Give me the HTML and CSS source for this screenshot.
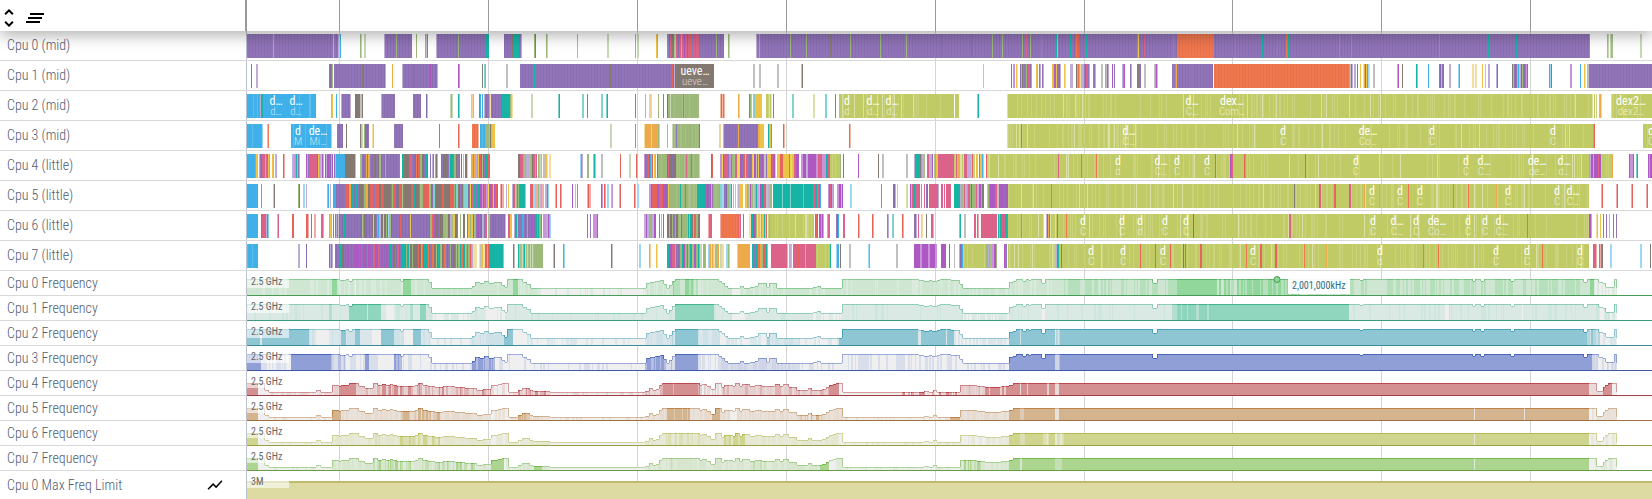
FILE: index.html
```html
<!DOCTYPE html>
<html lang="en">
<head>
<meta charset="utf-8">
<title>CPU trace timeline</title>
<link rel="stylesheet" href="styles.css">
</head>
<body>
<main class="viewer">
  <header class="topbar">
    <div class="toolbar">
      <button class="tool" type="button" aria-label="Expand all">
        <svg width="12" height="24" viewBox="6 0 12 24"><path d="M12 5.83L15.17 9l1.41-1.41L12 3 7.41 7.59 8.83 9 12 5.83zm0 12.34L8.83 15l-1.41 1.41L12 21l4.59-4.59L15.17 15 12 18.17z"/></svg>
      </button>
      <button class="tool" type="button" aria-label="Clear pinned tracks">
        <svg width="18" height="24" viewBox="3 0 18 24"><path d="M5 13h14v-2H5v2zm-2 4h14v-2H3v2zM7 7v2h14V7H7z"/></svg>
      </button>
    </div>
    <div class="ruler" id="ruler"></div>
  </header>
  <section class="tracks" id="tracks">
    <div class="grid" id="grid"></div>
  </section>
</main>
<script src="timeline.js"></script>
</body>
</html>
```
FILE: styles.css
```css
* {
  box-sizing: border-box;
}

body {
  margin: 0;
  background: #fff;
  font-family: "Roboto Condensed", Roboto, sans-serif;
}

.viewer {
  display: flex;
  flex-direction: column;
  height: 100vh;
  overflow: hidden;
}

.topbar {
  position: relative;
  z-index: 2;
  display: flex;
  flex: none;
  height: 31px;
  background: #fff;
  box-shadow: 0 4px 16px rgba(0, 0, 0, 0.32);
}

.toolbar {
  display: flex;
  flex: none;
  align-items: center;
  gap: 11px;
  width: 245px;
  padding: 4px 0 0 3px;
}

.tool {
  display: block;
  height: 24px;
  padding: 0;
  border: 0;
  background: none;
}

.tool svg {
  display: block;
}

.ruler {
  position: relative;
  flex: 1;
  border-left: 2px solid #999;
}

.tick {
  position: absolute;
  top: 0;
  bottom: 0;
  width: 1px;
  background: #999;
}

.tracks {
  position: relative;
  display: flex;
  flex: 1;
  flex-direction: column;
}

.grid {
  position: absolute;
  top: 0;
  right: 0;
  bottom: 0;
  left: 246px;
  border-left: 1px solid #b9c1cf;
}

.grid .tick {
  background: #d4d4d4;
}

.track {
  position: relative;
  display: flex;
  flex: none;
  height: 25px;
  border-bottom: 1px solid #d9d9d9;
}

.track.sched {
  height: 30px;
}

.track.limit {
  flex: 1;
  border-bottom: 0;
}

.shell {
  display: flex;
  flex: none;
  align-items: center;
  justify-content: space-between;
  width: 247px;
  padding: 0 23px 0 7px;
}

.sched .shell {
  padding-bottom: 1px;
}

.title {
  margin: 0;
  color: #4f5d70;
  font-size: 14px;
  font-weight: 300;
  white-space: nowrap;
}

.lane {
  position: relative;
  flex: 1;
  min-width: 0;
  overflow: hidden;
}

.sched .lane {
  margin: 3px 0 2px;
}

.freq .lane {
  margin-bottom: -1px;
  overflow: visible;
}

.lane svg {
  display: block;
  width: 100%;
  height: 100%;
}

.slice {
  position: absolute;
  top: 1px;
  display: flex;
  flex-direction: column;
  align-items: center;
  color: #fff;
  transform: translateX(-50%);
  white-space: nowrap;
}

.slice b {
  font-size: 12px;
  font-weight: 400;
  line-height: 12px;
}

.slice small {
  color: rgba(255, 255, 255, 0.7);
  font-size: 11px;
  font-weight: 300;
  line-height: 10px;
}

.scale {
  position: absolute;
  top: 4px;
  left: 0;
  width: 42px;
  padding-left: 4px;
  background: rgba(255, 255, 255, 0.6);
  color: #666;
  font-size: 10px;
  line-height: 13px;
  white-space: nowrap;
}

.limit .lane {
  margin-top: 10px;
  border-top: 2px solid #bfbb6c;
  background: #dddba2;
  overflow: visible;
}

.limit .scale {
  top: -8px;
}

.marker {
  position: absolute;
  top: 5px;
  width: 7px;
  height: 7px;
  border: 1px solid #43a355;
  border-radius: 50%;
  background: #8fd49a;
  transform: translateX(-50%);
}

.readout {
  position: absolute;
  top: 7px;
  z-index: 1;
  padding: 0 4px;
  background: rgba(255, 255, 255, 0.94);
  color: #2f6d88;
  font-size: 10px;
  line-height: 16px;
  white-space: nowrap;
}
```
FILE: timeline.js
```js
// Time axis: lane units run from START to START + SPAN.
const START = 247;
const SPAN = 1405;
const END = START + SPAN;
const TICKS = [339, 488, 637, 786, 935, 1084, 1232, 1381, 1530];

const COLORS = {
  p: '#9275b9', d: '#896db1', P: '#beaed7', b: '#3fb1e8', B: '#9dd7f3', c: '#5cbdec',
  o: '#c1cb65', q: '#cad37c', O: '#dbe0a6', g: '#9cb97a', G: '#c8d8b5', h: '#a6c088',
  t: '#17b3a5', T: '#7fd5cd', r: '#e4635b', R: '#f0aaa8', n: '#ef784f', i: '#e9704a',
  N: '#f6b9a4', y: '#ecc348', Y: '#f5dfa0', a: '#ecaa4b', A: '#f5cf98',
  m: '#ae58c2', M: '#ca92d8', k: '#db638a', K: '#ecabc2', w: '#837971', W: '#c2c0bf',
  e: '#e8da50'
};

// "x:letters" paints columns, a number after a letter repeats it.
// "x-y~letters" fills a busy range with a mix of the letters.
const SCHED = [
  { name: 'Cpu 0 (mid)', data: '247:p91 273:g 333:P 338:PBb 360:gG 364:GG 384:Pp27 396:g 416:g 425:gWp 436:Pp48 458:g 485:t4 504:p8wt6p2P 520:pP 534:gt 546:gG 577:g 607:GG 635:g.GG 656:yg 667:bspkpwtgykkpkkgkkmkkpkkrkpkkpkkkp25 716:g 728:gG 756:Pp832 759:g 790:g 806:g 830:w 850:g 880:g 906:g 941:w 971:w 992:g 1002:g 1021:tg 1026:k 1030:g 1041:s 1056:tT 1067:k 1070:tt 1076:nrr 1086:t 1137:by 1144:k 1173:k 1177:n37 1235:k 1262:t 1277:k 1286:nnt 1339:b 1351:b 1439:b 1488:t 1516:tt 1589:b 1607:gG.Ggg 1640:GG', text: [] },
  { name: 'Cpu 1 (mid)', data: '251:p 256:PP 329:p3g.p51P 362:w 392:a 402:Pp34P 413:w 430:m 458:mM 482:w.Tg 506:WW 520:p152rwP 534:t 610:w 675:w39 753:WW 759:WW 777:WW 801:Ww 983:y 1011:m.MM.yY 1020:pPwkprgtkrpg 1036:yP.pP.pP 1052:yPmpyp3P 1064:yY 1070:PPP 1076:wgnaYPPPpmkkpP 1093:kpP 1101:WW 1105:gWmP 1112:m.p 1122:Pbm 1130:pP 1137:pwkp 1144:WW 1154:Wgmy 1172:pkpnap36 1191:t 1214:n135gWmP.PP.m 1360:y 1363:YapybBY 1373:WW 1397:Pm 1402:w 1416:tT 1428:b 1439:ppPpp 1449:PP 1458:Bb 1472:YY.YY 1482:y..y 1488:PP 1496:Pp 1512:wPpppPbBPmgppkMm 1549:bBp 1570:MM 1580:b 1584:yY.PWp65', text: [[695, 'ueve…', 'ueve…']] },
  { name: 'Cpu 2 (mid)', data: '247:b13Pt2b53 253:c 257:c 309:gc 331:Py 336:b 341:Pp8P 355:w5WWw 381:Pp13 413:p8 426:pW 450:GgG 458:tT 471:NAT 479:tb.b.Pp4aYp11t8gyY 531:GG 558:Tt 582:TT 587:t 601:TT 606:Tt 635:t 645:a 649:AAA 658:g 663:t 667:wggGg28 683:k 720:NrNnN 738:aA 749:tgy.TTy7 766:oooOoY.t 792:TT 813:OO 825:TT 835:t 839:o120 854:O 863:O 882:O 901:O 913:O 954:.o 977:Tt 1007:Oo584O.o.o 1599:oaO 1611:Oo40', text: [[276, 'd…', 'd…'], [296, 'd…', 'd…'], [847, 'd', 'd'], [873, 'd…', 'd…'], [892, 'd…', 'd…'], [1192, 'd…', 'C…'], [1232, 'dex…', 'Com…'], [1631, 'dex2…', 'dex2…']] },
  { name: 'Cpu 3 (mid)', data: '247:b15B 252:c 267:Nn 291:b40B 305:c 337:p6 346:w 360:wWG.gwpwp 372:Yy 394:p9 439:r 458:rN 472:n6N.b5g4PwPy3 610:GG 635:n 644:Ya6Aa6gG 667:g 672:Gg26p 676:p 719:AA 723:Pp34aPyyyy 738:a 768:tTyn 783:rN 849:nN 1007:Oo585gr 1021:k 1643:o9', text: [[298, 'd', 'M'], [318, 'de…', 'Mi…'], [1129, 'd…', 'C…'], [1283, 'd', 'C'], [1368, 'de…', 'Co…'], [1432, 'd', 'C'], [1553, 'd', 'C'], [1651, 'd', 'C']] },
  { name: 'Cpu 4 (little)', data: '247:b9yW 259:PppkkkPkryM 272:yP 275:PP 283:rR 292:PPMgtPpP 306:mPpk8mygP 321:WmP.mPmmppPm.pPbb8 345:w10y 360-400~ppppppwpapkgpp 402-428~wwptrkgwpwnw 430:p.Pp.yp 435:gwP 441-460~gtrwgwkrtppw 461:w.W.wwG 471:aanaaPgytrwgpptttrr 518-537~PwkmgptgggWpky 538:gWGP.WWW 546:yY.YY 580:BbP 587:gg 593:TtW 601:WW 620:r 629:GG 636:rR 644:MmpprmbMr.yP.mgg 659:g41 667:wkwwwpwww 686:k 691:r 699:G 711:mr 720-776~MmkkpyeekrpmWg 777-796~g.Pykrekyy 796-817~mmMMP.m 816-830~kkrpMtk 830:o10g..p 858:m 878:w 882:WW 906:WW 914:PtttttwgP 922-938~pPmgkyW.P 938:k12 950-975~MkyOoorPgak 975-988~.rkyM 982:bB 987:o602gPmmPmmmmkpmoo10a 1058:k 1081:n 1096:n 1215:r 1230:mpk 1244:rg 1305:r 1629:mMMMm 1636:Tt 1648:mMmm', text: [[1118, 'd', 'd'], [1161, 'd…', 'C…'], [1177, 'd', 'C'], [1207, 'd', 'C'], [1356, 'd', 'C'], [1466, 'd', 'C'], [1484, 'd…', 'C…'], [1537, 'de…', 'de…'], [1564, 'd…', 'd…']] },
  { name: 'Cpu 5 (little)', data: '247:b11 261:b 273:Bw 298:gw 303:BB.P 327:Pb.P.. 333:b3p9 345-420~wpprrtgwwpraw 420-470~wprrrrwgpTww 470-498~mmMpkrte 500:RrRW 506:P.y 512:Pmkygpgt6y 530-544~rkPgBR 545:PPpB 555:Rr 560:rR 572:m 575:R.b 587:RrRR 601:mM.rP.BB 611:PM 619:Rr 634:rR 637:BB 649-669~rmMpmky 669:g28 680:t 685:p 697-713~pmtPtp 713:g7 720-731~yPgTBgp 731:p.P.y.Y 738-750~.PRWyg 750-772~PmkyWgt 773:t39 782:T 790:T 803:g 812-821~ktbB 828:MmkpPM 837:MMmmPm 850:BB 881:b 893:mpP.B 906:OG 910:mPktt 915:k5.b..k.pw 929-939~kPkk 939-954~.bP.km 954:t6 960-977~kkrpgPw 977-1000~.WkgwmP 1000-1008~mkmp 1008:o581 1051:n 1294:w 1319:rk 1334:rk 1349:rk 1364:a 1379:a 1408:n 1453:n 1468:n 1474:O 1496:a 1524:O 1601:Rr 1616:Rr 1631:Rr 1646:Rr', text: [[1372, 'd', 'C'], [1400, 'd', 'C'], [1420, 'd', 'C'], [1508, 'd', 'C'], [1557, 'd', 'C'], [1573, 'd…', 'C…']] },
  { name: 'Cpu 6 (little)', data: '247:b11 261:tkkkrPtT 277:Rk 292:rr 306:rkR 311:t 314:RR 321:kkP 329:ayP.r.pPkWp 340:p21 344:t 361-392~wPpgpwBpb 392:p38 400:r 410:y 430-450~gWmprgw 450-490~.Pmpwygkp 490-505~pppm 505-518~.yktP 518-542~pmtbgpk 543-551~BtmMP 587:p..p..MMMMm 644-656~mPMgmPm 659:p.P.p 667-700~gggpgwthg 694:rk 708:Rkkr 720:Rn17rgk 743:t 749-767~Ytkpymgr 768:ogo44 771:o 815:prt.mmMmP 827:Pkk 836:ppb 843:kk 858:rN 872:rR 887:kP 892:TP 902:rR 914:ppP.k 921:eY 926:w 931:rkR 959:gt 964:WW 974:kk.rR..k16 998:tgttktktts 1008:o581m2P 1021:n 1043:O..PpatO 1057:t 1066:n 1193:w 1289:kk 1474:O 1527:n 1596:Yy..y..p..p..P...p..p', text: [[1083, 'd', 'C'], [1122, 'd', 'C'], [1140, 'd', 'd'], [1165, 'd', 'C'], [1186, 'd', 'C'], [1373, 'd', 'C'], [1397, 'd…', 'C…'], [1416, 'd', 'C'], [1437, 'de…', 'Co…'], [1468, 'd', 'C'], [1485, 'd', 'C'], [1502, 'd…', 'C…']] },
  { name: 'Cpu 7 (little)', data: '247:b11 298:PP 306:p 329:wPpP..p3 337-400~pppmpmwmpptk 400-472~pwwgprtpgn 472-485~yY.YWP 485:rrart14P 513:wW 518:tTgPGgtGgGhgGgGgg9 553:Ww 563:bB 611:wW 639:BB 649:aA 656:yY 667-673~mtbp 672:kkkg 676-700~gptpmggt 700-730~yGg.aY.B 737:Aaaa10 752-768~agrtpng 771:k16R.aPy.k23 798:r 805:g 816:o14t 836:Bbb.w 849:WW 868:Bb 896:WW 914-937~mmMmm 941-946~mMm 949:w 954:W 959:PppbBo22 986-997~mMpgP 1004:mkp 1008:o581 1056:Ptt 1061:t 1140:r 1155:r 1170:r 1183:w 1185:r 1200:rk 1246:n 1260:rk 1275:kr 1304:n 1326:a 1423:n 1438:n 1474:O 1536:O 1542:n 1593:kkkR..kRkw 1610:BB 1640:BB 1650:w', text: [[1091, 'd', 'C'], [1123, 'd', 'C'], [1163, 'd', 'C'], [1253, 'd', 'C'], [1380, 'd', 'd'], [1496, 'd', 'C'], [1527, 'd', 'C'], [1580, 'd', 'C']] }
];

// Frequency steps, "x:height"; the value holds until the next step.
const BIG = '247:16 340:15 346:16 349:14 352:16 401:14 403:16 429:13 432:7 472:9 475:13 480:12 484:14 489:12 494:13 502:10 505:8 507:16 523:13 527:11 531:7 646:12 650:13 655:14 660:15 664:11 667:7 669:10 672:14 675:16 719:14 722:12 725:9 728:7 740:9 744:7 750:8 755:9 758:12 767:8 769:12 777:7 813:8 817:9 821:7 842:16 919:15 924:14 929:15 932:14 937:15 940:16 951:15 960:11 963:7 1009:13 1013:14 1016:16 1023:14 1026:16 1029:15 1031:16 1042:12 1045:16 1153:12 1157:16 1360:15 1363:16 1473:14 1475:16 1481:14 1484:16 1511:14 1514:16 1584:13 1587:16 1599:13 1603:12 1606:8 1614:16 1617:0';
const LITTLE = '247:12 265:5 269:3 316:5 321:3 332:10 339:9 341:10 349:12 359:9 365:7 373:12 378:10 382:11 386:10 390:11 393:10 397:9 415:10 418:12 423:10 428:9 435:8 443:9 455:8 465:7 477:5 483:6 491:10 498:11 502:12 509:3 518:5 522:7 530:5 533:4 550:3 645:4 649:7 653:5 656:6 659:10 662:12 700:10 702:11 707:9 711:6 715:12 722:8 724:10 733:9 735:12 740:9 742:11 750:9 755:10 762:9 775:11 780:9 783:11 789:8 797:5 808:7 812:5 822:6 826:8 829:10 833:11 836:12 843:3 924:4 929:3 933:5 937:3 960:10 977:9 985:8 1001:9 1009:10 1013:12 1597:4 1603:8 1605:10 1608:12 1617:0';

// Load levels per range: 0 is idle, 4 is busy.
const FREQ = [
  { fill: [145, 214, 155], line: [82, 180, 100], steps: BIG, load: '247-1617~1222 332-337~4 355-356~0 403-411~4 513-518~4 537-645~0001 673-698~2344 698-720~12 732-740~0 1060-1170~2233 1170-1177~34 1177-1213~4 1213-1245~2344 1245-1300~4443 1300-1590~2233 1590-1594~4 1594-1617~01' },
  { fill: [144, 213, 189], line: [70, 180, 146], steps: BIG, load: '247-1617~111112 329-332~3 349-381~4 367-368~2 386-394~0 410-413~3 420-426~4 433-470~01 485-505~01 675-714~4 732-745~0 813-842~01 914-918~01 963-1009~01 1036-1046~01 1172-1185~34 1185-1213~4443 1213-1349~4 1445-1449~0 1522-1523~0 1600-1617~012' },
  { fill: [143, 198, 212], line: [70, 162, 182], steps: BIG, load: '247-309~4 260-262~1 309-316~12 316-329~0 329-341~12 341-346~4 346-355~12 355-360~4 360-372~12 372-381~0 381-394~4 394-404~12 404-413~0 413-421~4 421-430~12 430-472~001 472-486~12 486-504~22 504-513~4 513-523~0 523-646~0001 646-667~12 667-675~123 675-698~4 698-720~12 720-767~01 767-770~3 770-800~12 800-839~01 839-1587~4 914-925~14 942-950~14 954-1009~01 1020-1021~2 1055-1060~13 1587-1600~243 1600-1617~01' },
  { fill: [144, 159, 214], line: [72, 102, 190], steps: BIG, load: '247-261~4 261-291~01 291-331~4 331-345~123 345-365~01 365-369~4 369-378~1 378-394~0 394-402~34 402-472~0001 472-495~344 495-645~00001 645-664~344 664-675~13 675-698~4 698-719~01 719-800~12 800-1009~001 1009-1592~4 1055-1060~23 1592-1617~012' },
  { fill: [212, 144, 144], line: [186, 72, 78], steps: LITTLE, load: '247-1617~1223 247-258~4 258-269~0 269-332~01 339-356~4 373-491~1234 491-518~01 518-550~1234 550-645~00001 660-700~3444 700-722~012 829-839~4 839-900~0 900-960~0134 985-1009~2444 1009-1589~4 1020-1021~1 1027-1028~2 1047-1049~2 1055-1059~1 1589-1603~1 1603-1612~4 1612-1617~0' },
  { fill: [212, 179, 143], line: [188, 130, 74], steps: LITTLE, load: '247-1617~1122 247-258~4 258-269~0 269-332~00001 332-341~4 400-440~2344 491-510~01 518-530~344 550-645~0001 667-690~344 690-712~12 712-720~4 730-737~0 797-822~1234 843-950~0001 950-960~4 1009-1589~4 1020-1024~3 1055-1059~1 1474-1475~1 1524-1525~1 1589-1617~01' },
  { fill: [207, 213, 143], line: [178, 186, 76], steps: LITTLE, load: '247-1617~1122 247-258~4 258-269~0 269-332~0001 373-420~1223 400-440~234 491-520~01 550-645~0 662-700~1223 724-745~2344 839-960~0001 960-1009~011 1009-1589~4 1020-1025~3 1043-1049~13 1055-1064~13 1474-1475~1 1589-1617~01' },
  { fill: [172, 213, 144], line: [118, 184, 78], steps: LITTLE, load: '247-1617~1122 247-258~4 258-269~0 269-332~00001 332-365~122 373-475~1234 491-504~4 504-518~01 534-542~4 550-645~0 667-690~1223 735-775~1223 820-829~4 829-960~0001 963-985~2344 1009-1589~4 1020-1022~2 1055-1062~13 1474-1475~1 1589-1617~01' }
];

const ALPHA = [0, 0.22, 0.34, 0.62, 1];
const LINE_ALPHA = [0.5, 0.56, 0.64, 0.8, 1];

const percent = x => ((x - START) / SPAN * 100) + '%';

function hash(a, b) {
  let h = (a * 374761393 + b * 668265263) | 0;
  h = Math.imul(h ^ (h >>> 13), 1274126177);
  return (h ^ (h >>> 16)) >>> 0;
}

function mix(columns, part, seed) {
  const [range, letters] = part.split('~');
  const [from, to] = range.split('-').map(Number);
  for (let x = from; x < to;) {
    const h = hash(x, seed);
    const width = 1 + (h >>> 8) % 2;
    for (let i = 0; i < width && x < to; i++) columns[x++] = letters[h % letters.length];
  }
}

function svg(width, height, body) {
  return `<svg viewBox="${START} 0 ${width} ${height}" preserveAspectRatio="none" shape-rendering="crispEdges" aria-hidden="true">${body}</svg>`;
}

function texture(letter, x, seed) {
  const h = hash(x, seed + 40) % 40;
  if (letter === 'p') return x % 3 === 0 ? 'd' : 'p';
  if (letter === 'n') return x % 3 === 0 ? 'i' : 'n';
  if (letter === 'o') return h === 0 ? 'O' : h < 8 ? 'q' : 'o';
  if (letter === 'g') return h < 10 ? 'h' : 'g';
  if (letter === 'b') return h < 2 ? 'c' : 'b';
  return letter;
}

function schedChart(data, seed) {
  const columns = [];
  data.split(' ').forEach(part => {
    if (part.includes('~')) return mix(columns, part, seed);
    const [start, letters] = part.split(':');
    let x = Number(start);
    for (const [, letter, count] of letters.matchAll(/([a-zA-Z.])(\d*)/g)) {
      for (let i = 0; i < Number(count || 1); i++) columns[x++] = letter;
    }
  });
  const paths = {};
  for (let x = START; x < END; x++) {
    const letter = columns[x];
    if (!letter || letter === '.') continue;
    const color = COLORS[texture(letter, x, seed)] || '#7d86bd';
    paths[color] = (paths[color] || '') + `M${x} 0h1v24h-1z`;
  }
  return svg(SPAN, 24, Object.entries(paths).map(([c, d]) => `<path fill="${c}" d="${d}"/>`).join(''));
}

function shade(color, alpha) {
  return `rgb(${color.map(v => Math.round(239 + (v - 239) * alpha)).join(',')})`;
}

function freqChart(row, seed) {
  const levels = [];
  row.load.split(' ').forEach(part => mix(levels, part, seed));
  const heights = [];
  row.steps.split(' ').forEach(step => {
    const [x, h] = step.split(':').map(Number);
    for (let i = x; i < END; i++) heights[i] = h;
  });
  const fills = {};
  const lines = {};
  const add = (paths, color, x, y, h) => { paths[color] = (paths[color] || '') + `M${x} ${y}h1v${h}h-1z`; };
  for (let x = START; x < END; x++) {
    const h = heights[x];
    if (!h) continue;
    const level = Number(levels[x] || 0);
    const next = heights[x + 1] || 0;
    const prev = x > START ? heights[x - 1] : h;
    const stem = next ? Math.max(h - next, h - prev, 1) : 9;
    add(fills, shade(row.fill, ALPHA[level]), x, 24 - h, h);
    add(lines, shade(row.line, LINE_ALPHA[level]), x, 24 - h, Math.min(stem, h));
  }
  const draw = paths => Object.entries(paths).map(([c, d]) => `<path fill="${c}" d="${d}"/>`).join('');
  const base = `rgb(${row.line.map(v => Math.round(v * 0.86)).join(',')})`;
  return svg(SPAN, 25, draw(fills) + draw(lines) + `<path fill="${base}" d="M${START} 24h${SPAN}v1h-${SPAN}z"/>`);
}

const tracks = document.getElementById('tracks');

function addTrack(kind, name, lane, icon = '') {
  tracks.insertAdjacentHTML('beforeend',
    `<article class="track ${kind}"><div class="shell"><h2 class="title">${name}</h2>${icon}</div><div class="lane">${lane}</div></article>`);
}

const ticks = TICKS.map(x => `<i class="tick" style="left:${percent(x)}"></i>`).join('');
document.getElementById('ruler').innerHTML = ticks;
document.getElementById('grid').innerHTML = ticks;

SCHED.forEach((row, i) => {
  const labels = row.text.map(([x, a, b]) => `<span class="slice" style="left:${percent(x)}"><b>${a}</b><small>${b}</small></span>`);
  addTrack('sched', row.name, schedChart(row.data, i) + labels.join(''));
});

FREQ.forEach((row, i) => {
  const hover = i ? '' : `<i class="marker" style="left:${percent(1277)}"></i><span class="readout" style="left:${percent(1288)}">2,001,000kHz</span>`;
  addTrack('freq', `Cpu ${i} Frequency`, freqChart(row, i + 20) + '<span class="scale">2.5 GHz</span>' + hover);
});

addTrack('limit', 'Cpu 0 Max Freq Limit', '<span class="scale">3M</span>',
  '<svg width="18" height="18" viewBox="0 0 24 24" aria-hidden="true"><path d="M3.5 18.49l6-6.01 4 4L22 6.92l-1.41-1.41-7.09 7.97-4-4L2 16.99z"/></svg>');
```
